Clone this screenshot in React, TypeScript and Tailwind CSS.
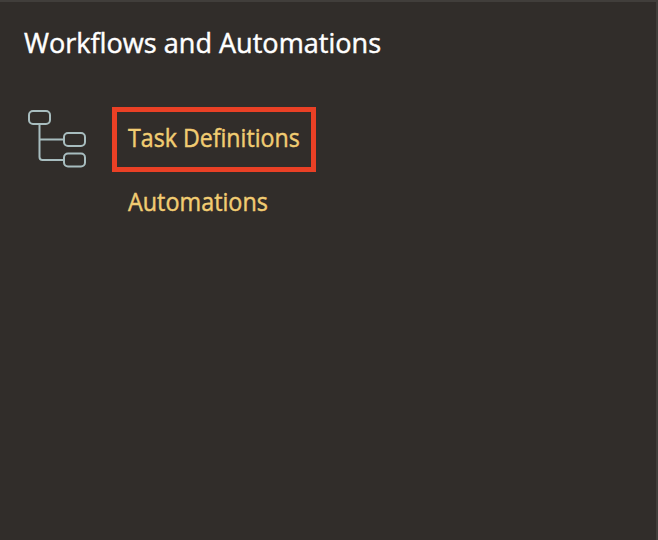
export default function App() {
  return (
    <main className="h-[540px] w-[658px] overflow-hidden border-t-2 border-r-2 border-[#413e3b] bg-[#312d2a] font-['Open_Sans','Noto_Sans',sans-serif] [-webkit-text-stroke:0.45px_currentColor]">
      <h2 className="mt-[22px] ml-6 h-9 origin-left scale-x-[0.967] text-[28px] leading-9 whitespace-nowrap text-white">
        Workflows and Automations
      </h2>
      <div className="mt-[45px] flex">
        <svg className="ml-[26px] h-[64px] w-[64px]" viewBox="26 105 64 64" fill="none" stroke="#a8bdbf" strokeWidth="2">
          <rect x="29" y="111" width="21" height="13" rx="4" />
          <rect x="64" y="133" width="21" height="13" rx="4" />
          <rect x="64" y="153.5" width="21" height="13" rx="4" />
          <path d="M39.5 124V157Q39.5 160 42.5 160H64M39.5 139.5H64" />
        </svg>
        <nav className="ml-[22px] mt-[2px] flex flex-col text-[25px] text-[#f1cc72]">
          <a className="flex h-[65px] w-[204px] items-center border-[5px] border-[#ea4025] pb-[3px] pl-[11px] whitespace-nowrap">
            <span className="origin-left scale-x-[0.927]">Task Definitions</span>
          </a>
          <a className="flex h-[60px] items-center pl-4 whitespace-nowrap">
            <span className="origin-left scale-x-[0.935]">Automations</span>
          </a>
        </nav>
      </div>
    </main>
  );
}
